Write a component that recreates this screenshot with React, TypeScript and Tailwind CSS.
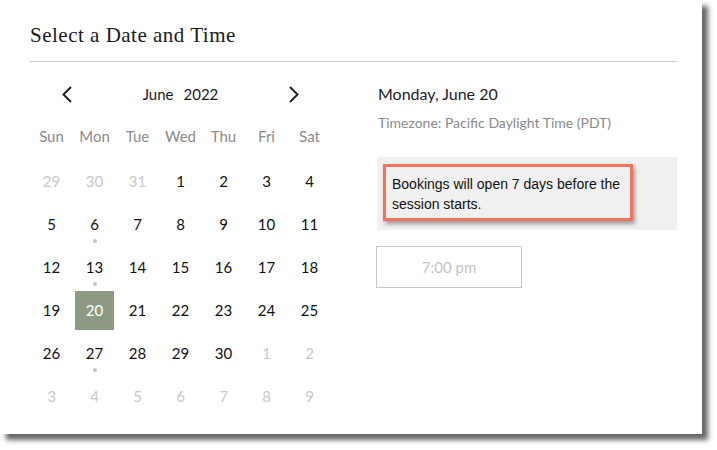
import React from "react";

type Day = { n: number; muted?: boolean; dot?: boolean; selected?: boolean };

const WEEKDAYS = ["Sun", "Mon", "Tue", "Wed", "Thu", "Fri", "Sat"];

const WEEKS: Day[][] = [
  [{ n: 29, muted: true }, { n: 30, muted: true }, { n: 31, muted: true }, { n: 1 }, { n: 2 }, { n: 3 }, { n: 4 }],
  [{ n: 5 }, { n: 6, dot: true }, { n: 7 }, { n: 8 }, { n: 9 }, { n: 10 }, { n: 11 }],
  [{ n: 12 }, { n: 13, dot: true }, { n: 14 }, { n: 15 }, { n: 16 }, { n: 17 }, { n: 18 }],
  [{ n: 19 }, { n: 20, selected: true }, { n: 21 }, { n: 22 }, { n: 23 }, { n: 24 }, { n: 25 }],
  [{ n: 26 }, { n: 27, dot: true }, { n: 28 }, { n: 29 }, { n: 30 }, { n: 1, muted: true }, { n: 2, muted: true }],
  [3, 4, 5, 6, 7, 8, 9].map((n) => ({ n, muted: true })),
];

function Chevron({ dir }: { dir: "left" | "right" }) {
  return (
    <svg width="10" height="17" viewBox="0 0 10 17" fill="none">
      <polyline
        points={dir === "left" ? "9,1 1.5,8.5 9,16" : "1,1 8.5,8.5 1,16"}
        stroke="#222"
        strokeWidth="2"
      />
    </svg>
  );
}

function DayCell({ day }: { day: Day }) {
  return (
    <div className="relative flex h-[43px] items-center justify-center">
      {day.selected ? (
        <div className="flex h-[39px] w-[39px] items-center justify-center bg-[#8d9b84] text-white">
          {day.n}
        </div>
      ) : (
        <span className={day.muted ? "text-[#c8c8c8]" : "text-[#111]"}>{day.n}</span>
      )}
      {day.dot && (
        <span className="absolute bottom-[3px] left-1/2 h-[4px] w-[4px] -translate-x-1/2 rounded-full bg-[#c4c4c4]" />
      )}
    </div>
  );
}

export default function App() {
  return (
    <div className="h-[450px] w-[717px] bg-white">
      <div className="h-[434px] w-[702px] bg-white pl-[30px] pr-[25px] shadow-[6px_6px_5px_rgba(0,0,0,0.6)] font-['Lato',sans-serif]">
        {/* Header */}
        <h1 className="pt-[22px] text-[21px] leading-[26px] tracking-[0.5px] text-[#1a1a1a] font-['Liberation_Serif',serif]">
          Select a Date and Time
        </h1>
        <div className="mt-[13px] h-px bg-[#cccccc]" />

        <div className="flex">
          {/* Calendar */}
          <div className="w-[301px]">
            <div className="mt-[17px] flex h-[30px] items-center justify-between px-[32px]">
              <Chevron dir="left" />
              <div className="flex gap-[10px] text-[15px] text-[#1a1a1a]">
                <span>June</span>
                <span>2022</span>
              </div>
              <Chevron dir="right" />
            </div>

            <div className="mt-[7px] grid h-[40px] grid-cols-7 items-center text-center text-[15px] text-[#8a8a8a]">
              {WEEKDAYS.map((d) => (
                <span key={d}>{d}</span>
              ))}
            </div>

            <div className="mt-[4px] grid grid-cols-7 text-[15px]">
              {WEEKS.flat().map((d, i) => (
                <DayCell key={i} day={d} />
              ))}
            </div>
          </div>

          {/* Details */}
          <div className="ml-[46px] flex-1">
            <div className="mt-[21px] pl-px text-[16px] leading-[22px] text-[#222]">Monday, June 20</div>
            <div className="mt-[9px] pl-px text-[14px] leading-[18px] text-[#8a8a8a]">
              Timezone: Pacific Daylight Time (PDT)
            </div>

            <div className="mt-[25px] bg-[#f0f0f0] pb-[9px] pl-[6px] pt-[7px]">
              <div className="w-[250px] border-[3px] border-[#f5735a] px-[6px] pb-[4px] pt-[7px] text-[14px] leading-[20px] text-[#111] shadow-[2px_3px_4px_rgba(0,0,0,0.35)] font-['Liberation_Sans',Arial,sans-serif]">
                Bookings will open 7 days before the session starts.
              </div>
            </div>

            <div className="mt-[16px] -ml-px flex h-[42px] w-[146px] items-center justify-center border border-[#c8c8c8] text-[15px] text-[#c4c4c4]">
              7:00 pm
            </div>
          </div>
        </div>
      </div>
    </div>
  );
}
